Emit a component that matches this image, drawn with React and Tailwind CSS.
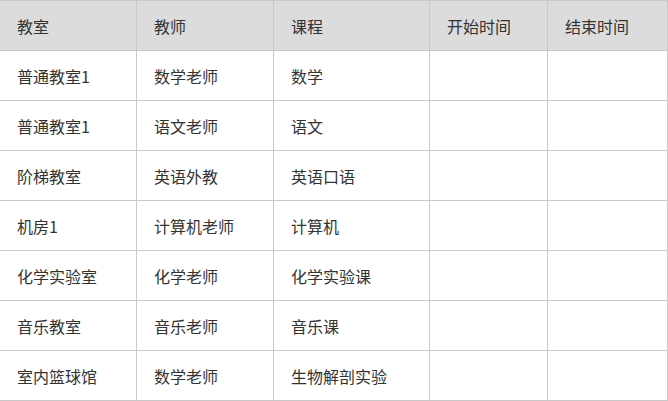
import React from "react";

const rows = [
  ["普通教室1", "数学老师", "数学"],
  ["普通教室1", "语文老师", "语文"],
  ["阶梯教室", "英语外教", "英语口语"],
  ["机房1", "计算机老师", "计算机"],
  ["化学实验室", "化学老师", "化学实验课"],
  ["音乐教室", "音乐老师", "音乐课"],
  ["室内篮球馆", "数学老师", "生物解剖实验"],
];

const headers = ["教室", "教师", "课程", "开始时间", "结束时间"];

export default function App() {
  return (
    <div
      className="w-[668px] h-[401px] bg-white overflow-hidden text-[#333] text-[16px]"
      style={{ fontFamily: '"Noto Sans CJK SC", "Noto Sans", sans-serif' }}
    >
      <div className="grid grid-cols-[137px_137px_156px_118px_120px] border-t border-[#c9c9c9]">
        {headers.map((h, i) => (
          <div
            key={i}
            className="h-[50px] bg-[#dcdcdc] border-r border-b border-[#c9c9c9] flex items-center pl-[17px]"
          >
            {h}
          </div>
        ))}
        {rows.map((r, ri) =>
          [...r, "", ""].map((c, ci) => (
            <div
              key={ri + "-" + ci}
              className="h-[50px] bg-white border-r border-b border-[#c9c9c9] flex items-center pl-[17px]"
            >
              {c}
            </div>
          ))
        )}
      </div>
    </div>
  );
}
